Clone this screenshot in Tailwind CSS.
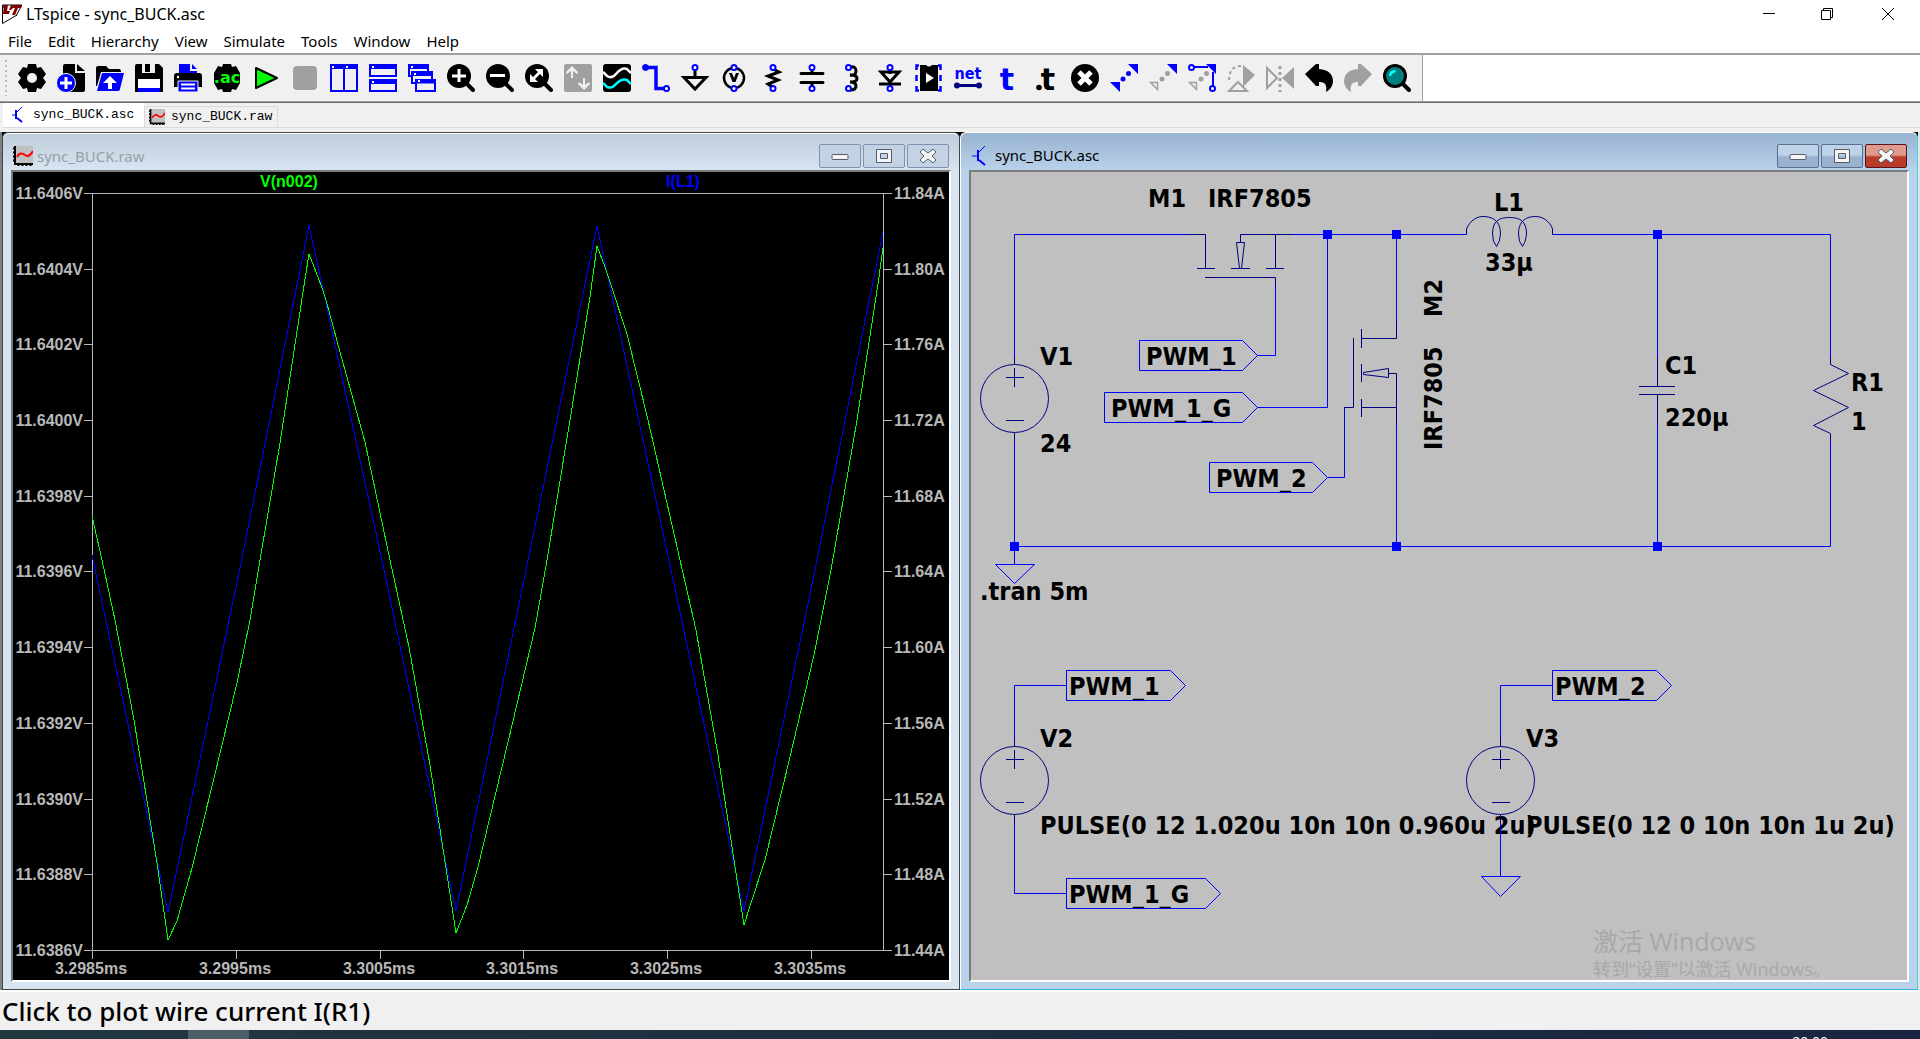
<!DOCTYPE html>
<html lang="en">
<head>
    <meta charset="UTF-8">
    <meta name="viewport" content="width=device-width, initial-scale=1.0">
    <title>LTspice - sync_BUCK.asc</title>
    <script src="https://cdn.jsdelivr.net/npm/@tailwindcss/browser@4"></script>
</head>
<body class="h-screen flex flex-col overflow-hidden bg-white text-black font-['Noto_Sans',sans-serif] text-[15px]">
    <!-- title bar -->
    <header class="h-7 shrink-0 flex items-center pl-0.5">
        <svg class="size-5" viewBox="0 0 20 20">
            <path d="M.5 1v18.500L15 11M.5 1H20L14 12M.5 1L2 4" fill="none" stroke="#000"/>
            <path d="M2 1h4L5 7h3L7 10H1zM9 1h11l-1 3h-3l-3 7h-3l3-7h-2L9 6H7z" fill="#800000"/>
        </svg>
        <h1 class="ml-1 text-base leading-7">LTspice - sync_BUCK.asc</h1>
        <div class="ml-auto flex">
            <button aria-label="Minimize" class="w-[58px] h-7 flex items-center justify-center"><svg class="size-3" viewBox="0 0 12 12"><path d="M0 5.500H12" stroke="#000"/></svg></button>
            <button aria-label="Restore" class="w-[58px] h-7 flex items-center justify-center"><svg class="size-3" viewBox="0 0 12 12" fill="none" stroke="#000"><path d="M.5 2.500H9.500V11.500H.5zM2.500 2.500V.5H11.500V9.500H9.500"/></svg></button>
            <button aria-label="Close" class="w-16 h-7 flex items-center justify-center"><svg class="size-3" viewBox="0 0 12 12" stroke="#000"><path d="M0 0L12 12M12 0L0 12"/></svg></button>
        </div>
    </header>
    <nav class="h-[25px] shrink-0 flex items-start gap-4 pl-2 leading-[26px]">
        <a href="#">File</a>
        <a href="#">Edit</a>
        <a href="#">Hierarchy</a>
        <a href="#">View</a>
        <a href="#">Simulate</a>
        <a href="#">Tools</a>
        <a href="#">Window</a>
        <a href="#">Help</a>
    </nav>

    <!-- toolbar -->
    <div class="h-[49px] shrink-0 flex border-t-2 border-b border-t-[#a0a0a0] border-b-[#a0a0a0] bg-white">
        <div class="flex items-center bg-[#f0f0f0] border-r border-[#a0a0a0] pl-1 pr-1.5">
            <svg class="w-2 h-9" viewBox="0 0 8 36"><path d="M2 0V36" stroke="#bbb" stroke-width="2" stroke-dasharray="2 3"/></svg>
            <button aria-label="Settings" class="w-[39px] flex justify-center"><svg class="size-7" viewBox="0 0 28 28"><path d="M10 0h8l1 4 4-1 5 7-3 4 3 4-5 7-4-1-1 4h-8l-1-4-4 1-5-7 3-4-3-4 5-7 4 1z"/><circle cx="14" cy="14" r="5" fill="#f0f0f0"/></svg></button>
            <button aria-label="New" class="w-[39px] flex justify-center"><svg class="size-7" viewBox="0 0 28 28"><path d="M6 2q0-2 2-2h10v9h10v17q0 2-2 2H8q-2 0-2-2zM20 0l8 7h-8z"/><circle cx="9" cy="19" r="9.500" fill="#00f" stroke="#f0f0f0"/><path d="M9 13v12M3 19h12" stroke="#fff" stroke-width="3"/></svg></button>
            <button aria-label="Open" class="w-[39px] flex justify-center"><svg class="size-7" viewBox="0 0 28 28"><path d="M0 4q0-2 2-2h8l3 3h10q2 0 2 3H5L1 22H0z"/><path d="M6 9h22l-4 16q0 2-3 2H1z" fill="#00f"/><path d="M14 12l7 7h-5v6h-4v-6H7z" fill="#fff"/></svg></button>
            <button aria-label="Save" class="w-[39px] flex justify-center"><svg class="size-7" viewBox="0 0 28 28"><path d="M0 2q0-2 2-2h22l4 4v24H0z"/><path d="M7 0h13v9H7z" fill="#f0f0f0"/><path d="M10 0h5v8h-5z"/><path d="M3 15h22v9H3z" fill="#fff"/><path d="M3 24h22v4H3z" fill="#00f"/></svg></button>
            <button aria-label="Print" class="w-[39px] flex justify-center"><svg class="size-7" viewBox="0 0 28 28"><path d="M5 0h11v7h7v3H5zM18 0l5 5h-5z" fill="#00f"/><path d="M0 12q0-3 3-3h22q3 0 3 3v11H0z"/><circle cx="4" cy="13" r="1.200" fill="#fff"/><path d="M4 17h20v11H4z" fill="#00f" stroke="#f0f0f0"/><path d="M7 20.500h14M7 24.500h14" stroke="#fff" stroke-width="2"/></svg></button>
            <button aria-label="AC analysis" class="w-[39px] flex justify-center"><svg class="size-7" viewBox="0 0 28 28"><path d="M10 0h8l1 3 4-1 4 7v10l-4 7-4-1-1 3h-8l-1-3-4 1-4-7V9l4-7 4 1z"/><text x="14" y="19" text-anchor="middle" font-family="DejaVu Sans" font-weight="bold" font-size="16" fill="#0f0">.ac</text></svg></button>
            <button aria-label="Run" class="w-[39px] flex justify-center"><svg class="size-7" viewBox="0 0 28 28"><path d="M4 4L25 14 4 24z" fill="#0f0" stroke="#000" stroke-width="2" stroke-linejoin="round"/></svg></button>
            <button aria-label="Stop" class="w-[39px] flex justify-center"><svg class="size-7" viewBox="0 0 28 28"><rect x="2" y="2" width="24" height="24" rx="4" fill="#a0a0a0"/></svg></button>
            <button aria-label="Tile vertically" class="w-[39px] flex justify-center"><svg class="size-7" viewBox="0 0 28 28" fill="#f0f0f0" stroke="#00f" stroke-width="2"><path d="M1 1h13v26H1zM14 1h13v26H14z"/><path d="M1 3h26" stroke-width="4"/><path d="M2 3h2M16 3h2" stroke="#fff"/></svg></button>
            <button aria-label="Tile horizontally" class="w-[39px] flex justify-center"><svg class="size-7" viewBox="0 0 28 28" fill="#f0f0f0" stroke="#00f" stroke-width="2"><path d="M1 1h26v11H1zM1 16h26v11H1z"/><path d="M1 3h26M1 18h26" stroke-width="4"/><path d="M3 3h2M3 18h2" stroke="#fff"/></svg></button>
            <button aria-label="Cascade" class="w-[39px] flex justify-center"><svg class="size-7" viewBox="0 0 28 28" fill="#f0f0f0" stroke="#00f" stroke-width="2"><path d="M1 1h19v11H1z"/><path d="M1 3h19" stroke-width="4"/><path d="M4 8h20v11H4z"/><path d="M4 10h20" stroke-width="4"/><path d="M8 16h19v11H8z"/><path d="M8 17.500h19" stroke-width="4"/><path d="M3 3h2M6 10h2M10 17h2" stroke="#fff"/></svg></button>
            <button aria-label="Zoom in" class="w-[39px] flex justify-center"><svg class="size-7" viewBox="0 0 28 28"><circle cx="12" cy="12" r="12"/><path d="M19 19l7 7" stroke="#000" stroke-width="4" stroke-linecap="round"/><path d="M12 5v13M5 12h14" stroke="#fff" stroke-width="3"/></svg></button>
            <button aria-label="Zoom out" class="w-[39px] flex justify-center"><svg class="size-7" viewBox="0 0 28 28"><circle cx="12" cy="12" r="12"/><path d="M19 19l7 7" stroke="#000" stroke-width="4" stroke-linecap="round"/><path d="M4 11.500h15" stroke="#fff" stroke-width="3"/></svg></button>
            <button aria-label="Zoom to fit" class="w-[39px] flex justify-center"><svg class="size-7" viewBox="0 0 28 28"><circle cx="12" cy="12" r="12"/><path d="M19 19l7 7" stroke="#000" stroke-width="4" stroke-linecap="round"/><path d="M10 5h8v8l-3-3-5 5 3 3H5v-8l3 3 5-5z" fill="#fff"/></svg></button>
            <button aria-label="Autorange" class="w-[39px] flex justify-center"><svg class="size-7" viewBox="0 0 28 28"><rect width="28" height="28" rx="2" fill="#a0a0a0"/><path d="M8 2l6 6-1 2-4-3v7H7V7l-4 3-1-2zM20 26l-6-6 1-2 4 3v-7h2v7l4-3 1 2z" fill="#f0f0f0"/></svg></button>
            <button aria-label="Waveforms" class="w-[39px] flex justify-center"><svg class="size-7" viewBox="0 0 28 28" fill="none" stroke-width="2.500"><rect width="28" height="28" rx="3" fill="#000"/><path d="M0 8l4 4q5 3 9-2 6-7 11-5l4 4" stroke="#fff"/><path d="M0 19l4 4q5 2 9-3 6-6 11-4l4 4" stroke="#0ff"/></svg></button>
            <button aria-label="Wire" class="w-[39px] flex justify-center"><svg class="size-7" viewBox="0 0 28 28" fill="none" stroke="#00f"><path d="M3 3.500h11v21h8" stroke-width="3.500"/><circle cx="3.500" cy="3.500" r="3" fill="#00f"/><circle cx="24.500" cy="24.500" r="2.500" fill="#fff" stroke-width="2"/></svg></button>
            <button aria-label="Ground" class="w-[39px] flex justify-center"><svg class="size-7" viewBox="0 0 28 28" fill="none" stroke="#000" stroke-width="3"><path d="M14 6v8M3 13.500h22L14 25z"/><circle cx="14" cy="3.500" r="2.500" fill="#fff" stroke="#00f" stroke-width="2"/></svg></button>
            <button aria-label="Voltage source" class="w-[39px] flex justify-center"><svg class="size-7" viewBox="0 0 28 28" fill="none" stroke="#000" stroke-width="2.500"><circle cx="14" cy="14" r="10"/><path d="M9 9h3l2 5 2-5h3l-3.500 9h-3z" fill="#000" stroke="none"/><g fill="#fff" stroke="#00f" stroke-width="2"><circle cx="14" cy="3.500" r="2.500"/><circle cx="14" cy="24.500" r="2.500"/></g></svg></button>
            <button aria-label="Resistor" class="w-[39px] flex justify-center"><svg class="size-7" viewBox="0 0 28 28" fill="none" stroke="#000" stroke-width="3"><path d="M14 5l6 3-11 4 10 4-10 4 6 4"/><g fill="#fff" stroke="#00f" stroke-width="2"><circle cx="14" cy="3.500" r="2.500"/><circle cx="14" cy="24.500" r="2.500"/></g></svg></button>
            <button aria-label="Capacitor" class="w-[39px] flex justify-center"><svg class="size-7" viewBox="0 0 28 28" fill="none" stroke="#000" stroke-width="3" stroke-linecap="round"><path d="M14 5v4M14 19v4M3 9.500h22M3 18.500h22"/><g fill="#fff" stroke="#00f" stroke-width="2"><circle cx="14" cy="3.500" r="2.500"/><circle cx="14" cy="24.500" r="2.500"/></g></svg></button>
            <button aria-label="Inductor" class="w-[39px] flex justify-center"><svg class="size-7" viewBox="0 0 28 28" fill="none" stroke="#000" stroke-width="3"><path d="M13 3q6-1 6 4t-6 4q7 0 7 3.500T13 18q6 0 6 4t-6 4"/><g fill="#fff" stroke="#00f" stroke-width="2"><circle cx="11.500" cy="3.500" r="2.500"/><circle cx="11.500" cy="24.500" r="2.500"/></g></svg></button>
            <button aria-label="Diode" class="w-[39px] flex justify-center"><svg class="size-7" viewBox="0 0 28 28" fill="none" stroke="#000" stroke-width="3"><path d="M14 6v4M5 8h18L14 18zM3 20h22"/><g fill="#fff" stroke="#00f" stroke-width="2"><circle cx="14" cy="3.500" r="2.500"/><circle cx="14" cy="24.500" r="2.500"/></g></svg></button>
            <button aria-label="Component" class="w-[39px] flex justify-center"><svg class="size-7" viewBox="0 0 28 28"><path d="M5 1h6q3 3 6 0h6v26H5z"/><path d="M11 9l8 5-8 5z" fill="#fff"/><path d="M4 1.500H1.500V6M1.500 11v6M1.500 22v4.500H4M23 1.500h2.500V6M25.500 11v6M25.500 22v4.500H23" fill="none" stroke="#00f" stroke-width="2.500"/></svg></button>
            <button aria-label="Label net" class="w-[39px] flex justify-center"><svg class="size-7" viewBox="0 0 28 28"><text x="14" y="15" text-anchor="middle" font-family="DejaVu Sans Condensed, DejaVu Sans" font-weight="bold" font-size="16" fill="#00f">net</text><path d="M3 21.500h22" stroke="#000080" stroke-width="3"/><circle cx="3" cy="21.500" r="3" fill="#000080"/><circle cx="25" cy="21.500" r="3" fill="#000080"/></svg></button>
            <button aria-label="Text" class="w-[39px] flex justify-center"><svg class="size-7 overflow-visible" viewBox="0 0 28 28"><text x="14" y="26" text-anchor="middle" font-family="DejaVu Sans" font-weight="bold" font-size="30" fill="#00f">t</text></svg></button>
            <button aria-label="SPICE directive" class="w-[39px] flex justify-center"><svg class="size-7 overflow-visible" viewBox="0 0 28 28"><circle cx="7" cy="23.500" r="2.800"/><text x="16" y="26" text-anchor="middle" font-family="DejaVu Sans" font-weight="bold" font-size="30">t</text></svg></button>
            <button aria-label="Delete" class="w-[39px] flex justify-center"><svg class="size-7" viewBox="0 0 28 28"><circle cx="14" cy="14" r="14"/><path d="M8 8l12 12M20 8L8 20" stroke="#fff" stroke-width="5"/></svg></button>
            <button aria-label="Duplicate" class="w-[39px] flex justify-center"><svg class="size-7" viewBox="0 0 28 28" fill="#00f"><path d="M18 0h10v10zM0 18h10v10z"/><circle cx="18.500" cy="9.500" r="2.500"/><circle cx="13" cy="15" r="2.500"/></svg></button>
            <button aria-label="Move" class="w-[39px] flex justify-center"><svg class="size-7" viewBox="0 0 28 28" fill="#a0a0a0"><path d="M18 0h10v10z" fill="#00f"/><path d="M1.500 18.500h7v7z" fill="none" stroke="#a0a0a0" stroke-width="1.500"/><circle cx="18.500" cy="9.500" r="2.500"/><circle cx="13" cy="15" r="2.500"/></svg></button>
            <button aria-label="Drag" class="w-[39px] flex justify-center"><svg class="size-7" viewBox="0 0 28 28" fill="#a0a0a0"><path d="M18 0h10v10z" fill="#00f"/><path d="M1.500 18.500h7v7z" fill="none" stroke="#a0a0a0" stroke-width="1.500"/><circle cx="18.500" cy="9.500" r="2.500"/><circle cx="13" cy="15" r="2.500"/><g fill="#fff" stroke="#00f" stroke-width="2"><path d="M6 3h14M25 8v14" /><circle cx="3.500" cy="3.500" r="2.500"/><circle cx="24.500" cy="24.500" r="2.500"/></g></svg></button>
            <button aria-label="Rotate" class="w-[39px] flex justify-center"><svg class="size-7" viewBox="0 0 28 28" fill="none" stroke="#a0a0a0" stroke-width="2"><path d="M16 1l12 10-12 12z" fill="#a0a0a0" stroke="none"/><path d="M14 2Q2 2 2 17" stroke-dasharray="3 3"/><path d="M2 27l9-9 9 9z"/></svg></button>
            <button aria-label="Mirror" class="w-[39px] flex justify-center"><svg class="size-7" viewBox="0 0 28 28" fill="none" stroke="#a0a0a0" stroke-width="2"><path d="M1 4l10 10L1 24z"/><path d="M28 3v22L16 14z" fill="#a0a0a0" stroke="none"/><path d="M14 2v26" stroke-width="3" stroke-dasharray="3 3"/></svg></button>
            <button aria-label="Undo" class="w-[39px] flex justify-center"><svg class="size-7" viewBox="0 0 28 28"><path d="M0 10L11 0h3v5q14 1 14 13-1 7-7 10 2-11-7-10v4h-3z"/></svg></button>
            <button aria-label="Redo" class="w-[39px] flex justify-center"><svg class="size-7" viewBox="0 0 28 28"><path d="M28 10L17 0h-3v5Q0 6 0 18q1 7 7 10-2-11 7-10v4h3z" fill="#a0a0a0"/></svg></button>
            <button aria-label="Search" class="w-[39px] flex justify-center"><svg class="size-7" viewBox="0 0 28 28"><path d="M19 19l7 7" stroke="#000" stroke-width="4" stroke-linecap="round"/><circle cx="12" cy="12" r="10.500" fill="#008080" stroke="#000" stroke-width="3"/><path d="M6 12q0-6 6-6l1 2q-4 1-5 4z" fill="#0ff"/></svg></button>
        </div>
    </div>

    <!-- document tabs -->
    <div class="h-[30px] shrink-0 bg-[#f0f0f0] border-t border-t-[#696969] pl-[3px]">
        <div class="h-[25px] border-b border-[#dadada] flex items-start font-['Liberation_Mono',monospace] text-[13px]">
            <button class="h-6 w-[141px] bg-white flex items-center gap-2.5 pl-2">
                <svg class="w-3 h-4" viewBox="0 0 12 16" stroke="#00f" fill="none"><path d="M1 8h4M11 0L5 6"/><path d="M5 3v9M6 11l5 4" stroke-width="2"/></svg>sync_BUCK.asc
            </button>
            <button class="h-[22px] w-[134px] mt-[3px] border border-[#dadada] flex items-center gap-1.5 pl-1">
                <svg class="size-4" viewBox="0 0 20 20"><path d="M3 0h17v17H3z" fill="#c0c0c0"/><path d="M2 0v18H20M0 2.500h2M0 6.500h2M0 10.500h2M0 14.500h2M5.500 18v2M9.500 18v2M13.500 18v2M17.500 18v2" fill="none" stroke="#000" stroke-width="2"/><path d="M4 11q3-6 8-2 4 3 8-4" fill="none" stroke="red" stroke-width="2"/></svg>sync_BUCK.raw
            </button>
        </div>
    </div>

    <!-- document windows -->
    <main class="flex-1 min-h-0 grid grid-cols-2 bg-black border-x-2 border-l-[#808080] border-r-[#e3e3e3]">
        <section class="flex flex-col min-w-0 min-h-0 rounded-t-md border border-[#444] bg-[#d7e4f2] px-2 pb-[7px]">
            <div class="h-[37px] shrink-0 -mx-2 px-2.5 pt-2 flex items-center rounded-t-md border-t border-white bg-linear-to-b from-[#bfcddb] to-[#d7e4f2]">
                <svg class="size-5" viewBox="0 0 20 20"><path d="M3 0h17v17H3z" fill="#c0c0c0"/><path d="M2 0v18H20M0 2.500h2M0 6.500h2M0 10.500h2M0 14.500h2M5.500 18v2M9.500 18v2M13.500 18v2M17.500 18v2" fill="none" stroke="#000" stroke-width="2"/><path d="M4 11q3-6 8-2 4 3 8-4" fill="none" stroke="red" stroke-width="2"/></svg>
                <h2 class="ml-1 text-[#9a9fa6]">sync_BUCK.raw</h2>
                <div class="ml-auto flex gap-0.5">
                    <button aria-label="Minimize plot" class="w-[42px] h-6 rounded-xs border border-[#8493ad] bg-[#c3d3e4] flex items-center justify-center"><svg class="size-5" viewBox="0 0 20 20"><rect x="2" y="8.500" width="16" height="5" rx="1" fill="#f4f4f4" stroke="#565b68"/></svg></button>
                    <button aria-label="Maximize plot" class="w-[42px] h-6 rounded-xs border border-[#8493ad] bg-[#c3d3e4] flex items-center justify-center"><svg class="size-5" viewBox="0 0 20 20"><path d="M2.500 3.500h15v13h-15zM6.500 7.500v5h7v-5z" fill="#f4f4f4" fill-rule="evenodd" stroke="#565b68"/></svg></button>
                    <button aria-label="Close plot" class="w-[42px] h-6 rounded-xs border border-[#8493ad] bg-[#c3d3e4] flex items-center justify-center"><svg class="size-5" viewBox="0 0 20 20"><path d="M5 3l5 4 5-4 3 3-4 4 4 4-3 3-5-4-5 4-3-3 4-4-4-4z" fill="#f4f4f4" stroke="#565b68"/></svg></button>
                </div>
            </div>
            <div class="flex-1 min-h-0 border-t-2 border-l-2 border-b-2 border-r-2 border-t-[#7a7a7a] border-l-[#7a7a7a] border-b-white border-r-white bg-black">
                <svg class="block size-full" viewBox="13 172 936 808" font-family="Liberation Sans, Arial, sans-serif" font-weight="bold" font-size="16" fill="#b8b8b8">
                    <g fill="none" stroke="#b8b8b8">
                        <path d="M92.500 193.500H883.500V950.500H92.500z"/>
                        <path d="M84 193.500h8M84 269.500h8M84 344.500h8M84 420.500h8M84 496.500h8M84 571.500h8M84 647.500h8M84 723.500h8M84 799.500h8M84 874.500h8M84 950.500h8"/>
                        <path d="M884 193.500h8M884 269.500h8M884 344.500h8M884 420.500h8M884 496.500h8M884 571.500h8M884 647.500h8M884 723.500h8M884 799.500h8M884 874.500h8M884 950.500h8"/>
                        <path d="M92.500 951v8M236.500 951v8M380.500 951v8M523.500 951v8M667.500 951v8M811.500 951v8"/>
                    </g>
                    <g text-anchor="end">
                        <text x="83" y="199">11.6406V</text>
                        <text x="83" y="275">11.6404V</text>
                        <text x="83" y="350">11.6402V</text>
                        <text x="83" y="426">11.6400V</text>
                        <text x="83" y="502">11.6398V</text>
                        <text x="83" y="577">11.6396V</text>
                        <text x="83" y="653">11.6394V</text>
                        <text x="83" y="729">11.6392V</text>
                        <text x="83" y="805">11.6390V</text>
                        <text x="83" y="880">11.6388V</text>
                        <text x="83" y="956">11.6386V</text>
                    </g>
                    <g>
                        <text x="894" y="199">11.84A</text>
                        <text x="894" y="275">11.80A</text>
                        <text x="894" y="350">11.76A</text>
                        <text x="894" y="426">11.72A</text>
                        <text x="894" y="502">11.68A</text>
                        <text x="894" y="577">11.64A</text>
                        <text x="894" y="653">11.60A</text>
                        <text x="894" y="729">11.56A</text>
                        <text x="894" y="805">11.52A</text>
                        <text x="894" y="880">11.48A</text>
                        <text x="894" y="956">11.44A</text>
                    </g>
                    <g text-anchor="middle">
                        <text x="91" y="974">3.2985ms</text>
                        <text x="235" y="974">3.2995ms</text>
                        <text x="379" y="974">3.3005ms</text>
                        <text x="522" y="974">3.3015ms</text>
                        <text x="666" y="974">3.3025ms</text>
                        <text x="810" y="974">3.3035ms</text>
                        <text x="289" y="187" fill="#0f0">V(n002)</text>
                        <text x="683" y="187" fill="#00f">I(L1)</text>
                    </g>
                    <g fill="none" shape-rendering="crispEdges">
                        <polyline stroke="#00f" points="92,555 115,663 168,912 240,568 309,225 384,570 456,911 526,570 597,226 671,570 744,911 815,570 883,232"/>
                        <polyline stroke="#0f0" points="92,516 102,560 115,620 134,720 157,863 168,940 177,921 192,868 214,778 237,683 250,620 260,560 280,443 303,292 309,254 321,285 326,300 340,352 365,442 390,560 409,647 430,765 446,868 456,933 467,905 478,867 508,742 535,628 547,560 570,420 590,297 597,246 605,267 612,288 627,334 648,420 680,560 696,630 718,755 734,860 744,925 751,903 765,860 790,757 814,655 831,570 857,420 878,284 883,248"/>
                    </g>
                </svg>
            </div>
        </section>

        <section class="flex flex-col min-w-0 min-h-0 rounded-t-md border border-t-white border-l-white border-b-[#38b8d8] border-r-[#38d8f0] bg-[#b9d1ea] px-2 pb-[7px]">
            <div class="h-[37px] shrink-0 -mx-2 px-2.5 pt-2 flex items-center rounded-t-md bg-linear-to-b from-[#99b4d1] to-[#b9d1ea]">
                <svg class="w-4 h-5" viewBox="0 0 16 20" stroke="#00f" fill="none"><path d="M1 10h6M14 0L7 7"/><path d="M7 4v11M8 14l6 5" stroke-width="2"/></svg>
                <h2 class="ml-2">sync_BUCK.asc</h2>
                <div class="ml-auto flex gap-0.5">
                    <button aria-label="Minimize schematic" class="w-[42px] h-6 rounded-xs border border-[#5b6f91] bg-linear-to-b from-[#bfd3e8] from-45% to-[#98b2d0] to-55% flex items-center justify-center"><svg class="size-5" viewBox="0 0 20 20"><rect x="2" y="8.500" width="16" height="5" rx="1" fill="#f4f4f4" stroke="#565b68"/></svg></button>
                    <button aria-label="Maximize schematic" class="w-[42px] h-6 rounded-xs border border-[#5b6f91] bg-linear-to-b from-[#bfd3e8] from-45% to-[#98b2d0] to-55% flex items-center justify-center"><svg class="size-5" viewBox="0 0 20 20"><path d="M2.500 3.500h15v13h-15zM6.500 7.500v5h7v-5z" fill="#f4f4f4" fill-rule="evenodd" stroke="#565b68"/></svg></button>
                    <button aria-label="Close schematic" class="w-[42px] h-6 rounded-xs border border-[#5a1420] bg-linear-to-b from-[#e09a8c] from-45% to-[#b83c28] to-55% flex items-center justify-center"><svg class="size-5" viewBox="0 0 20 20"><path d="M5 3l5 4 5-4 3 3-4 4 4 4-3 3-5-4-5 4-3-3 4-4-4-4z" fill="#f4f4f4" stroke="#565b68"/></svg></button>
                </div>
            </div>
            <div class="flex-1 min-h-0 border-t-2 border-l-2 border-b-2 border-r-2 border-t-[#7a7a7a] border-l-[#7a7a7a] border-b-white border-r-white bg-[#c0c0c0]">
                <svg class="block size-full" viewBox="971 172 936 808" font-family="DejaVu Sans Condensed, DejaVu Sans, sans-serif" font-weight="bold" font-size="25" fill="#000">
                    <!-- labels -->
                    <text x="1148" y="207">M1</text>
                    <text x="1208" y="207">IRF7805</text>
                    <text x="1494" y="211">L1</text>
                    <text x="1485" y="271">33µ</text>
                    <text x="1040" y="365">V1</text>
                    <text x="1040" y="452">24</text>
                    <text x="1146" y="365">PWM_1</text>
                    <text x="1111" y="417">PWM_1_G</text>
                    <text x="1216" y="487">PWM_2</text>
                    <text transform="translate(1442 317) rotate(-90)">M2</text>
                    <text transform="translate(1442 450) rotate(-90)">IRF7805</text>
                    <text x="1665" y="374">C1</text>
                    <text x="1665" y="426">220µ</text>
                    <text x="1851" y="391">R1</text>
                    <text x="1851" y="430">1</text>
                    <text x="980" y="600">.tran 5m</text>
                    <text x="1069" y="695">PWM_1</text>
                    <text x="1040" y="747">V2</text>
                    <text x="1040" y="834">PULSE(0 12 1.020u 10n 10n 0.960u 2u)</text>
                    <text x="1069" y="903">PWM_1_G</text>
                    <text x="1555" y="695">PWM_2</text>
                    <text x="1526" y="747">V3</text>
                    <text x="1526" y="834">PULSE(0 12 0 10n 10n 1u 2u)</text>

                    <!-- wires -->
                    <g fill="none" stroke="#00f">
                        <path d="M1014.500 356V234.500H1189M1292 234.500H1466.500M1552.500 234.500H1830.500V356M1830.500 442V546.500H1014.500M1014.500 442V564.500M1396.500 234V322M1396.500 425V546M1657.500 234V356M1657.500 425V546"/>
                        <path d="M1275.500 286V355.500H1257.500M1257.500 407.500H1327.500V234.500M1327.500 477.500H1344.500V407.500"/>
                        <path d="M1014.500 738V685.500H1066.500M1014.500 823V893.500H1066.500M1500.500 738V685.500H1552.500M1500.500 823V876.500"/>
                        <path d="M995.500 564.500H1034.500L1014.500 583.500zM1481.500 876.500H1520.500L1500.500 896.500z"/>
                        <path d="M1139.500 340.500H1242.500L1257.500 355.500L1242.500 370.500H1139.500z"/>
                        <path d="M1104.500 392.500H1242.500L1257.500 407.500L1242.500 422.500H1104.500z"/>
                        <path d="M1209.500 462.500H1312.500L1327.500 477.500L1312.500 492.500H1209.500z"/>
                        <path d="M1066.500 670.500H1170.500L1185.500 685.500L1170.500 700.500H1066.500z"/>
                        <path d="M1066.500 878.500H1205.500L1220.500 893.500L1205.500 908.500H1066.500z"/>
                        <path d="M1552.500 670.500H1656.500L1671.500 685.500L1656.500 700.500H1552.500z"/>
                    </g>

                    <!-- components -->
                    <g fill="none" stroke="#000080">
                        <circle cx="1014.500" cy="398.500" r="34"/>
                        <path d="M1014.500 356v8M1014.500 433v9M1006 377.500h18M1014.500 368v19M1006 420.500h18"/>
                        <circle cx="1014.500" cy="780.500" r="34"/>
                        <path d="M1014.500 738v8M1014.500 815v8M1006 759.500h18M1014.500 750v19M1006 802.500h18"/>
                        <circle cx="1500.500" cy="780.500" r="34"/>
                        <path d="M1500.500 738v8M1500.500 815v8M1492 759.500h18M1500.500 750v19M1492 802.500h18"/>
                        <path d="M1189 234.500H1205.500V268.500M1197 268.500h18M1231 268.500h19M1266 268.500h18M1292 234.500H1240.500V242.500M1236.500 242.500h8l-3 26h-2zM1275.500 234.500V268.500M1205 277.500H1275.500V286"/>
                        <path d="M1396.500 322V338.500H1361.500M1361.500 329v19M1361.500 364v18M1361.500 399v18M1361.500 407.500H1396.500M1396.500 425V373.500H1388.500M1388.500 368.500v9l-25-3v-2zM1353.500 338V407.500H1344"/>
                        <path d="M1466.500 234.500V229C1470 220 1478 216 1484 216.500C1497 217 1500.500 225 1500.500 234Q1500 242 1496.500 246.500Q1492.500 242 1492.500 234C1492.500 221 1499 217.500 1509.500 217.500C1520 217.500 1526.500 221 1526.500 234Q1526 242 1522.500 246.500Q1518.500 242 1518.500 234C1518.500 225 1522 217 1534.500 216.500C1542 216 1550 221 1552.500 229V234.500"/>
                        <path d="M1657.500 356V386.500M1639 386.500h36M1639 394.500h36M1657.500 394.500V425"/>
                        <path d="M1830.500 356V364.500L1848.500 373.500L1813.500 390.500L1848.500 407.500L1813.500 425.500L1830.500 433.500V442"/>
                    </g>
                    <path fill="#00f" d="M1323 230h9v9h-9zM1392 230h9v9h-9zM1653 230h9v9h-9zM1010 542h9v9h-9zM1392 542h9v9h-9zM1653 542h9v9h-9z"/>

                    <g fill="#a8a8a8" font-family="Open Sans, Noto Sans CJK SC, sans-serif" font-weight="normal">
                        <text x="1593" y="951" font-size="25">激活 Windows</text>
                        <text x="1593" y="976" font-size="18">转到“设置”以激活 Windows。</text>
                    </g>
                </svg>
            </div>
        </section>
    </main>

    <!-- status bar -->
    <footer class="h-10 shrink-0 bg-[#f0f0f0] border-t-2 border-t-white pl-0.5 flex items-center text-[26px] leading-none font-medium">Click to plot wire current I(R1)</footer>
    <div class="h-[9px] shrink-0 overflow-hidden bg-linear-to-r from-[#22383f] to-[#1a2442] flex items-start justify-between">
        <div class="ml-[188px] w-[61px] h-full bg-[#4d5f66]"></div>
        <time class="mr-[92px] mt-0.5 text-sm text-white">20:00</time>
    </div>
</body>
</html>
